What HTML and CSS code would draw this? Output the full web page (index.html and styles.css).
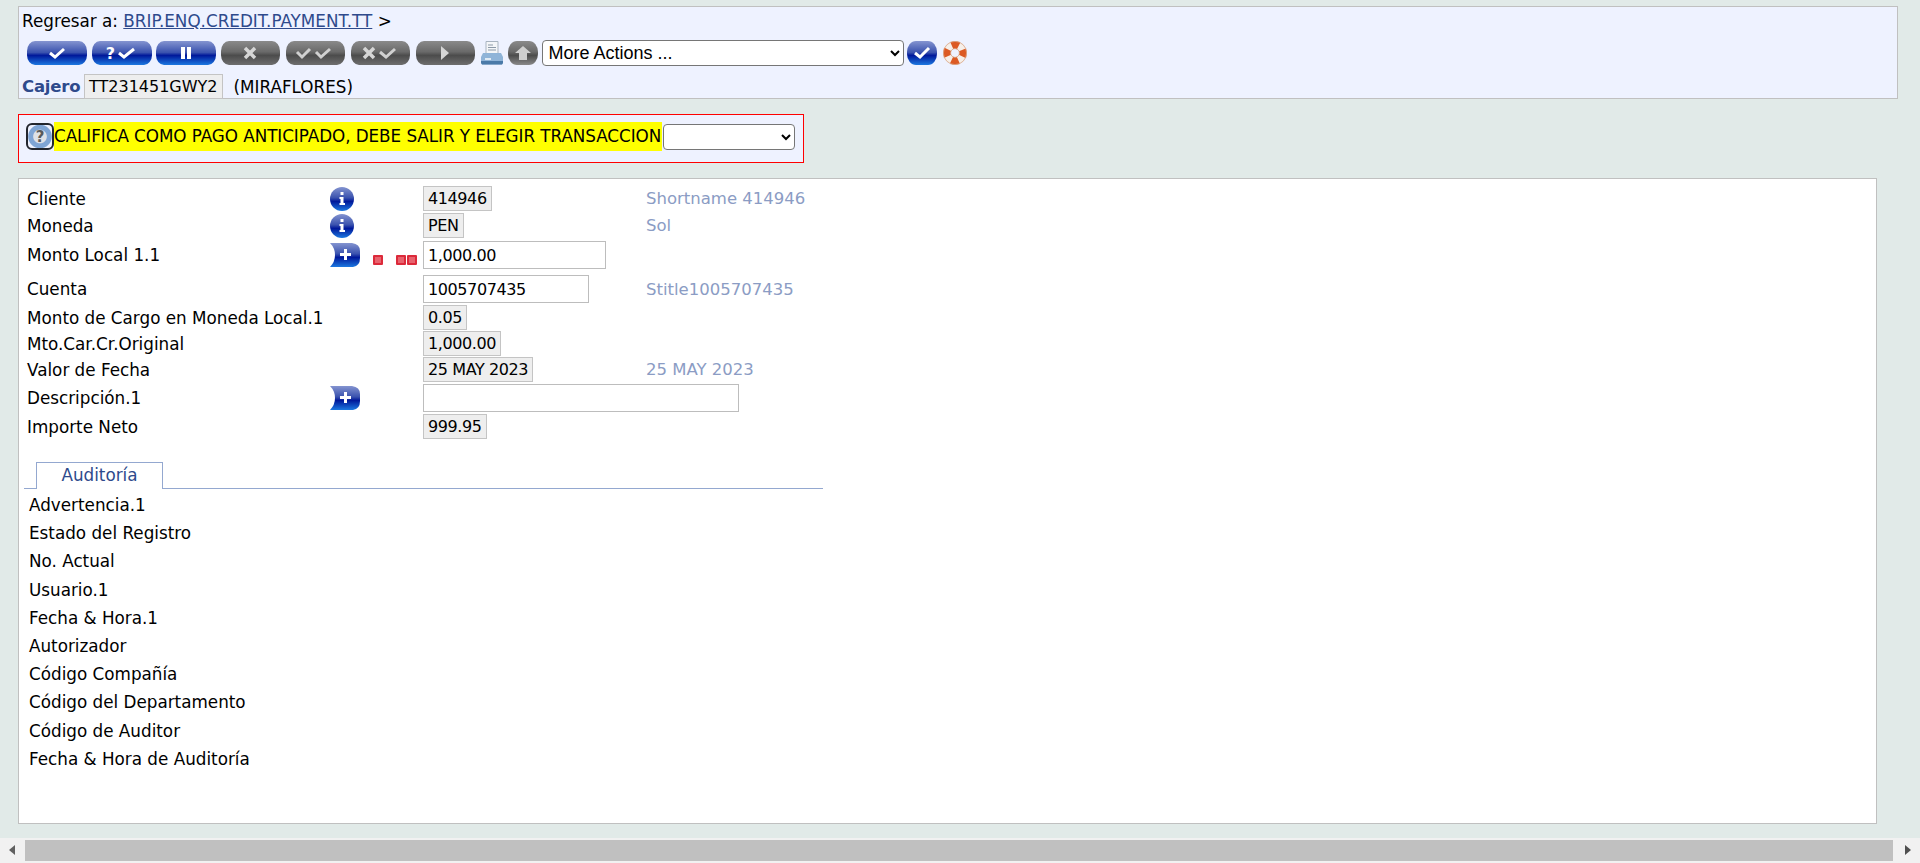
FILE: index.html
```html
<!DOCTYPE html>
<html lang="es">
<head>
  <meta charset="UTF-8" />
  <title>Cajero TT231451GWY2</title>
  <link rel="stylesheet" href="styles.css">
</head>
<body>
  <div class="page">
    <div class="header">
      <div class="back">Regresar a: <a href="#">BRIP.ENQ.CREDIT.PAYMENT.TT</a> &gt;</div>
      <div class="toolbar">
        <span class="pill blue"><svg width="20" height="14" viewBox="0 0 20 14"><path class="tick" d="M3 7l5 4 9-8"/></svg></span>
        <span class="pill blue"><span class="q">?</span><svg width="20" height="14" viewBox="0 0 20 14"><path class="tick" d="M2 7l5 4 10-8"/></svg></span>
        <span class="pill blue"><svg width="14" height="14" viewBox="0 0 14 14"><path fill="#fff" d="M2 1h4v12H2zM8 1h4v12H8z"/></svg></span>
        <span class="pill gray"><svg width="14" height="14" viewBox="0 0 14 14"><path class="cross" d="M2 2l10 10M12 2L2 12"/></svg></span>
        <span class="pill gray"><svg width="40" height="14" viewBox="0 0 40 14"><path class="tick" d="M2 6l5 5 8-8M21 6l5 5 9-8"/></svg></span>
        <span class="pill gray"><svg width="14" height="14" viewBox="0 0 14 14"><path class="cross" d="M2 2l10 10M12 2L2 12"/></svg><svg width="20" height="14" viewBox="0 0 20 14"><path class="tick" d="M2 6l6 5 9-8"/></svg></span>
        <span class="pill gray"><svg width="10" height="16" viewBox="0 0 10 16"><path fill="#d5d5d5" d="M1 1l8 7-8 7z"/></svg></span>
        <svg class="tool printer" width="24" height="24" viewBox="0 0 24 24">
          <path fill="#f4f6f8" stroke="#a9b4c0" d="M6 .5h12v13H6z"/>
          <path stroke="#8d9aa8" d="M8 4h5M8 6.500h8M8 9h8"/>
          <path fill="#8fb4d8" d="M3 12h18l2 4v6l-1 1.500H2L1 22v-6z"/>
          <path fill="#4a7aa8" d="M1 20h22v2l-1 1.500H2L1 22z"/>
          <path fill="#dfeaf4" d="M5 17h6v2H5z"/>
        </svg>
        <span class="orb gray-orb"><svg width="20" height="16" viewBox="0 0 20 16"><path fill="#cfcfcf" d="M10 1l8 7h-4v7H6V8H2z"/></svg></span>
        <select class="actions"><option>More Actions ...</option></select>
        <span class="orb blue-orb"><svg width="22" height="16" viewBox="0 0 22 16"><path class="tick" d="M4 8l5 4 9-9"/></svg></span>
        <svg class="tool ring" width="24" height="24" viewBox="0 0 24 24">
          <circle cx="12" cy="12" r="8" fill="none" stroke="#f6efe9" stroke-width="7.500"/>
          <circle cx="12" cy="12" r="8" fill="none" stroke="#dc5a24" stroke-width="7.500" stroke-dasharray="7 5.570" stroke-dashoffset="3.500"/>
          <circle cx="12" cy="12" r="11.600" fill="none" stroke="#d8a484" stroke-width=".8"/>
          <circle cx="12" cy="12" r="4.400" fill="none" stroke="#d8a484" stroke-width=".8"/>
        </svg>
      </div>
      <div class="cashier">
        <span class="cashier-label">Cajero</span>
        <span class="ro ro-id">TT231451GWY2</span>
        <span class="branch">(MIRAFLORES)</span>
      </div>
    </div>

    <div class="alert">
      <span class="help"><span class="help-q">?</span></span>
      <span class="alert-text">CALIFICA COMO PAGO ANTICIPADO, DEBE SALIR Y ELEGIR TRANSACCION</span>
      <select class="alert-select"><option></option></select>
    </div>

    <div class="main">
      <div class="row r-ro">
        <span>Cliente</span>
        <span class="ic"><svg class="info" width="24" height="24"><use href="#info"/></svg></span>
        <span class="val"><span class="ro">414946</span></span>
        <span class="enrich">Shortname 414946</span>
      </div>
      <div class="row r-ro">
        <span>Moneda</span>
        <span class="ic"><svg class="info" width="24" height="24"><use href="#info"/></svg></span>
        <span class="val"><span class="ro">PEN</span></span>
        <span class="enrich">Sol</span>
      </div>
      <div class="row r-in r-monto">
        <span>Monto Local 1.1</span>
        <span class="ic"><svg width="30" height="24"><use href="#plus"/></svg><span class="reds"><i></i><i class="gap"></i><i></i></span></span>
        <span class="val"><input class="in w-183" value="1,000.00"></span>
        <span class="enrich"></span>
      </div>
      <div class="row r-in r-cuenta">
        <span>Cuenta</span>
        <span class="ic"></span>
        <span class="val"><input class="in w-166" value="1005707435"></span>
        <span class="enrich">Stitle1005707435</span>
      </div>
      <div class="row r-ro">
        <span>Monto de Cargo en Moneda Local.1</span>
        <span class="ic"></span>
        <span class="val"><span class="ro">0.05</span></span>
        <span class="enrich"></span>
      </div>
      <div class="row r-ro">
        <span>Mto.Car.Cr.Original</span>
        <span class="ic"></span>
        <span class="val"><span class="ro">1,000.00</span></span>
        <span class="enrich"></span>
      </div>
      <div class="row r-ro">
        <span>Valor de Fecha</span>
        <span class="ic"></span>
        <span class="val"><span class="ro">25 MAY 2023</span></span>
        <span class="enrich">25 MAY 2023</span>
      </div>
      <div class="row r-in">
        <span>Descripción.1</span>
        <span class="ic"><svg width="30" height="24"><use href="#plus"/></svg></span>
        <span class="val"><input class="in w-316" value=""></span>
        <span class="enrich"></span>
      </div>
      <div class="row r-ro">
        <span>Importe Neto</span>
        <span class="ic"></span>
        <span class="val"><span class="ro">999.95</span></span>
        <span class="enrich"></span>
      </div>

      <div class="tabs"><span class="tab">Auditoría</span></div>
      <ul class="audit">
        <li>Advertencia.1</li>
        <li>Estado del Registro</li>
        <li>No. Actual</li>
        <li>Usuario.1</li>
        <li>Fecha &amp; Hora.1</li>
        <li>Autorizador</li>
        <li>Código Compañía</li>
        <li>Código del Departamento</li>
        <li>Código de Auditor</li>
        <li>Fecha &amp; Hora de Auditoría</li>
      </ul>
    </div>
  </div>

  <div class="hbar">
    <span class="arrow left"></span>
    <span class="thumb"></span>
    <span class="arrow right"></span>
  </div>

  <svg width="0" height="0" class="defs">
    <defs>
      <linearGradient id="orbFill" x1="0" y1="0" x2="0" y2="1">
        <stop offset="0" stop-color="#8494d0"/>
        <stop offset=".45" stop-color="#3a52ae"/>
        <stop offset=".6" stop-color="#00189a"/>
        <stop offset="1" stop-color="#1c78e0"/>
      </linearGradient>
      <symbol id="info" viewBox="0 0 24 24">
        <circle cx="12" cy="12" r="12" fill="url(#orbFill)"/>
        <path fill="#fff" d="M10.500 5h3v3h-3zM9.500 10h4v6h1.500v2H9.500v-2h1v-4h-1z"/>
      </symbol>
      <symbol id="plus" viewBox="0 0 30 24">
        <path fill="url(#orbFill)" d="M0 0h22q8 1 8 8v7q0 8-7 9H0q5-5 5-12T0 0z"/>
        <path fill="#fff" d="M14 6h3v4h4v3h-4v4h-3v-4h-4v-3h4z"/>
      </symbol>
    </defs>
  </svg>
</body>
</html>
```

FILE: styles.css
```css
* { box-sizing: border-box; }
html, body { height: 100%; }
body {
  margin: 0;
  height: 100vh;
  overflow: hidden;
  display: flex;
  flex-direction: column;
  background: #e1eae8;
  color: #000;
  font-family: "DejaVu Sans", Tahoma, sans-serif;
  font-size: 16.800px;
}
.page { flex: 1; padding: 6px 22px 0 18px; min-height: 0; }
.defs { position: absolute; }

/* header */
.header {
  height: 93px;
  background: #eef2ff;
  border: 1px solid #c0c0c0;
  padding: 0 0 0 3px;
}
.back { height: 33px; line-height: 28px; }
.back a { color: #2e4a8c; }
.toolbar {
  display: flex;
  align-items: center;
  height: 26px;
  padding-left: 5px;
}
.pill {
  width: 60px;
  height: 24px;
  margin-right: 4.500px;
  border-radius: 8px / 10px;
  display: flex;
  align-items: center;
  justify-content: center;
  gap: 2px;
}
.pill.blue { background: linear-gradient(#8494d0 0, #3a52ae 48%, #00189a 60%, #1c78e0 100%); }
.pill.gray { background: linear-gradient(#8a8a8a 0, #6a6a6a 45%, #4c4c4c 60%, #6e6e6e 100%); width: 59px; margin-right: 6px; }
.tick { fill: none; stroke: #fff; stroke-width: 3; }
.gray .tick { stroke: #d0d0d0; }
.cross { fill: none; stroke: #d5d5d5; stroke-width: 3.500; }
.q { color: #fff; font-weight: bold; font-size: 16px; }
.tool { flex: none; margin-right: 5px; }
.printer { margin-right: 4px; margin-left: -1px; }
.orb {
  width: 30px;
  height: 24px;
  border-radius: 9px / 11px;
  display: flex;
  align-items: center;
  justify-content: center;
  flex: none;
}
.gray-orb { background: linear-gradient(#8a8a8a 0, #6a6a6a 45%, #4c4c4c 60%, #8a8a8a 100%); margin-right: 4px; }
.blue-orb { background: linear-gradient(#8494d0 0, #3a52ae 48%, #00189a 60%, #1c78e0 100%); margin-left: 3px; margin-right: 6px; }
.actions {
  width: 362px;
  height: 26px;
  font-family: "Liberation Sans", Arial, sans-serif;
  font-size: 18px;
  background: #fff;
  border: 1px solid #767676;
  border-radius: 4px;
  padding-left: 2px;
  flex: none;
}
.cashier { display: flex; align-items: center; height: 25px; margin-top: 8px; }
.cashier-label { color: #2e4a8c; font-weight: bold; width: 62px; flex: none; font-size: 16.500px; letter-spacing: -0.200px; }
.branch { margin-left: 11px; }

/* readonly + input */
.ro {
  display: inline-block;
  height: 25px;
  line-height: 23px;
  padding: 0 4px;
  font-size: 16px;
  letter-spacing: -0.400px;
  background: #eee;
  border: 1px solid #c4c4c4;
  white-space: nowrap;
}
.ro-id { letter-spacing: 0; }
.in {
  height: 28px;
  padding: 0 4px;
  font: inherit;
  font-size: 16px;
  letter-spacing: -0.400px;
  color: #000;
  background: #fff;
  border: 1px solid #bdbdbd;
  display: block;
}
.w-183 { width: 183px; }
.w-166 { width: 166px; }
.w-316 { width: 316px; }

/* alert */
.alert {
  width: 786px;
  height: 49px;
  margin-top: 15px;
  padding: 7px 0 0 7px;
  background: #eef2ff;
  border: 1px solid #f00;
  display: flex;
  align-items: flex-start;
}
.help {
  width: 28px;
  height: 27px;
  margin-top: 1px;
  border: 2.500px solid #23262e;
  border-radius: 6px;
  background: radial-gradient(circle, #dfe1e6 0 38%, #7fa5d5 44% 68%, #eef2ff 74%);
  display: flex;
  align-items: center;
  justify-content: center;
  flex: none;
}
.help-q { font-weight: bold; font-size: 15px; color: #5a5a5a; }
.alert-text {
  background: #ff0;
  height: 29px;
  line-height: 29px;
  white-space: nowrap;
  width: 608px;
  flex: none;
  letter-spacing: -0.060px;
}
.alert-select {
  width: 132px;
  height: 26px;
  margin: 2px 0 0 1px;
  background: #fff;
  border: 1px solid #767676;
  border-radius: 4px;
}

/* main panel */
.main {
  width: 1859px;
  height: 646px;
  margin-top: 15px;
  background: #fff;
  border: 1px solid #c0c0c0;
  padding: 7px 0 0 8px;
  display: flex;
  flex-direction: column;
}
.row {
  display: grid;
  flex: none;
  grid-template-columns: 303px 93px 223px 1fr;
  align-items: center;
}
.r-ro { height: 25px; margin-bottom: 1px; }
.r-ro:first-child { margin-bottom: 2px; }
.r-in { height: 28px; margin: 1px 0 2px; }
.r-monto { margin-top: 2px; }
.r-cuenta { margin-top: 4px; }
.ic { display: flex; align-items: center; }
.val { display: block; }
.val .ro { display: block; width: max-content; }
.enrich { color: #8b9cc4; white-space: nowrap; font-size: 16.500px; }
.reds { display: flex; margin-left: 13px; margin-top: 9px; gap: 1px; }
.reds i {
  width: 10px;
  height: 10px;
  background: #e8636e;
  border: 2px solid #dc2a3a;
  border-radius: 1px;
}
.reds i.gap { margin-left: 12px; }

.tabs {
  flex: none;
  margin: 22px 0 0 -3px;
  width: 799px;
  height: 27px;
  padding-left: 12px;
  border-bottom: 1px solid #94a8d0;
}
.tab {
  display: block;
  width: 127px;
  height: 27px;
  line-height: 25px;
  text-align: center;
  color: #2e4a8c;
  background: #fff;
  border: 1px solid #94a8d0;
  border-bottom: 0;
}
.audit { list-style: none; margin: 0; padding: 2px 0 0 2px; }
.audit li { height: 28.200px; line-height: 28px; }

/* page scrollbar */
.hbar {
  flex: none;
  height: 25px;
  background: #f1f1f1;
  display: flex;
  align-items: center;
}
.thumb { height: 21px; flex: 1; background: #c0c0c0; }
.arrow { height: 21px; position: relative; flex: none; }
.arrow.left { width: 25px; }
.arrow.right { width: 27px; }
.arrow::before {
  content: "";
  position: absolute;
  top: 5px;
  border-top: 5.500px solid transparent;
  border-bottom: 5.500px solid transparent;
}
.arrow.left::before { left: 9px; border-right: 6px solid #606060; }
.arrow.right::before { left: 12px; border-left: 6px solid #505050; }
```
